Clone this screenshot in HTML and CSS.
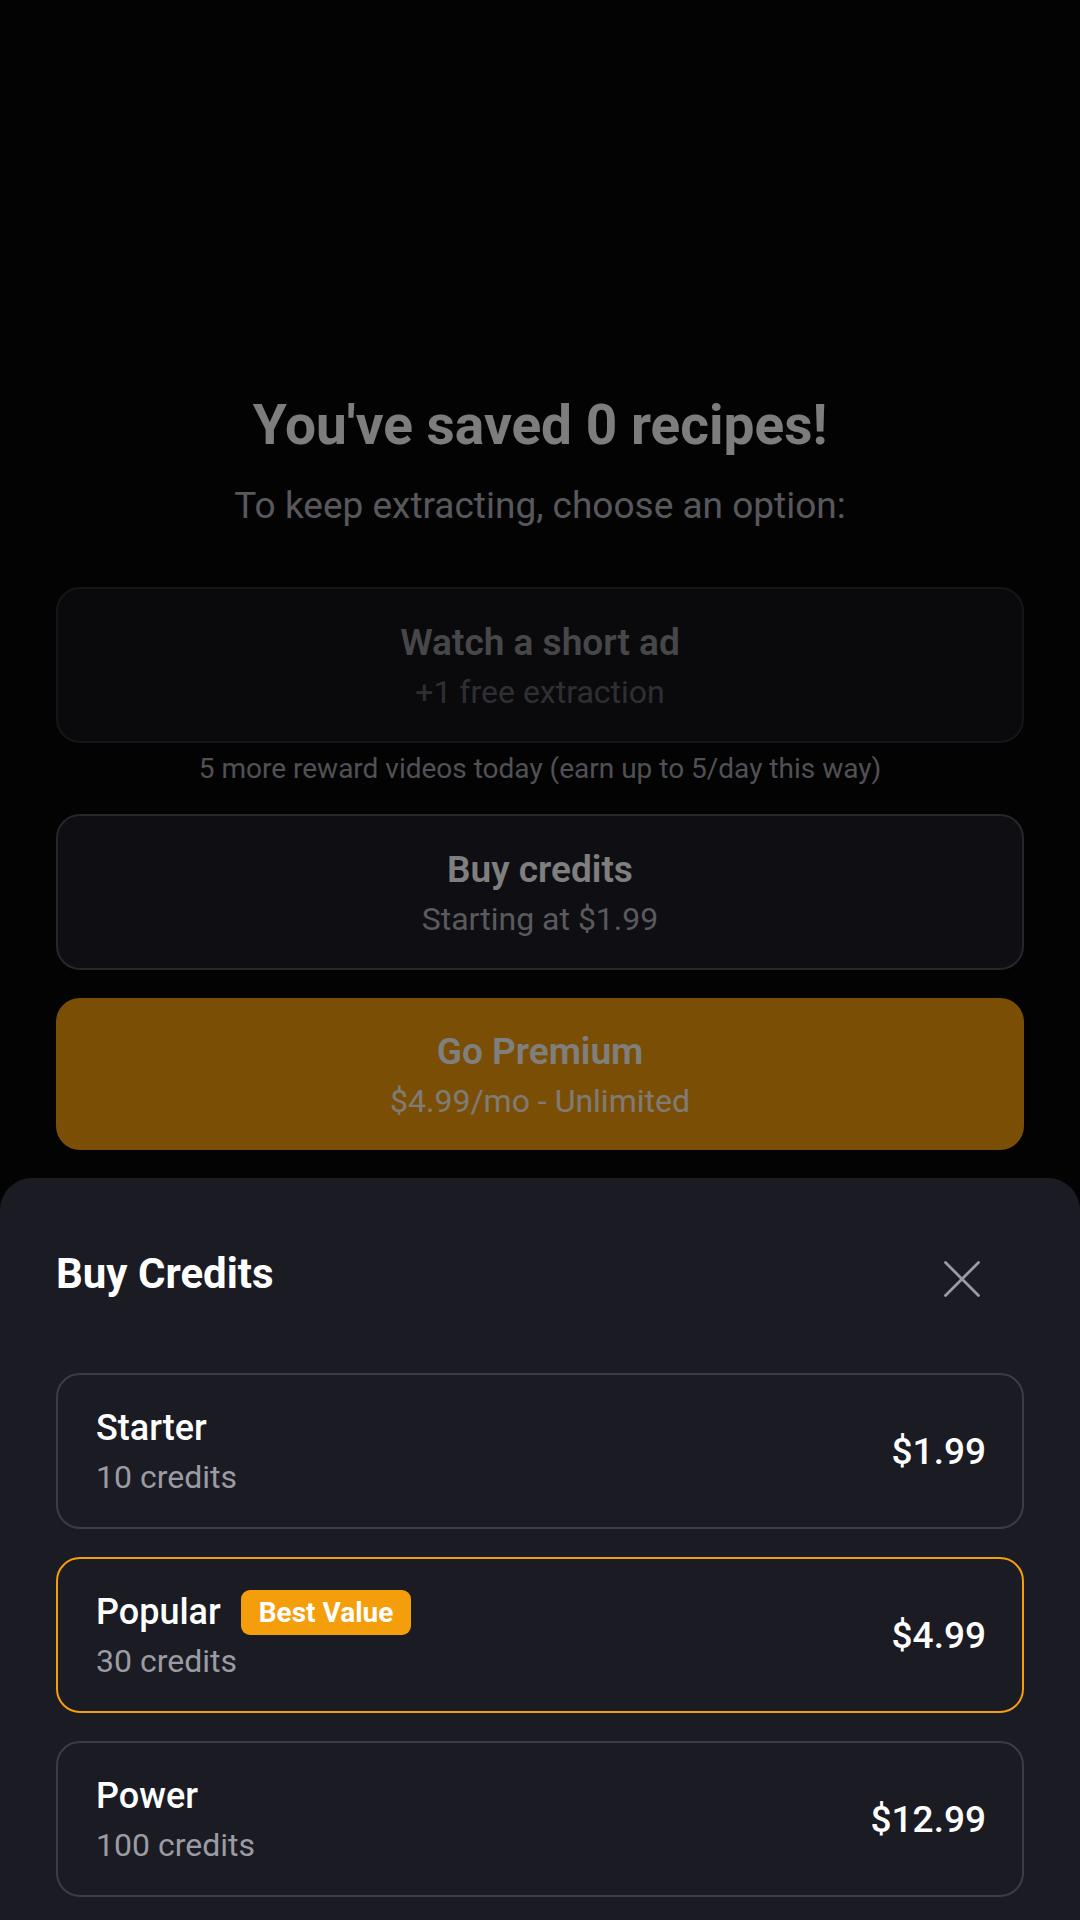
FILE: index.html
```html
<!DOCTYPE html>
<html lang="en">
<head>
<meta charset="utf-8">
<title>Buy Credits</title>
<link rel="stylesheet" href="styles.css">
</head>
<body>
<div class="screen">
  <main class="paywall">
    <h1 class="pw-title">You've saved 0 recipes!</h1>
    <p class="pw-sub">To keep extracting, choose an option:</p>

    <div class="option-group">
      <button class="option option-disabled">
        <span class="opt-title">Watch a short ad</span>
        <span class="opt-sub">+1 free extraction</span>
      </button>
      <p class="opt-note">5 more reward videos today (earn up to 5/day this way)</p>
    </div>

    <button class="option">
      <span class="opt-title">Buy credits</span>
      <span class="opt-sub">Starting at $1.99</span>
    </button>

    <button class="option option-premium">
      <span class="opt-title">Go Premium</span>
      <span class="opt-sub">$4.99/mo - Unlimited</span>
    </button>
  </main>

  <div class="backdrop"></div>

  <section class="sheet">
    <header class="sheet-head">
      <h2 class="sheet-title">Buy Credits</h2>
      <button class="close" aria-label="Close">
        <svg viewBox="0 0 40 40" width="40" height="40"><path d="M3.5 3.5L36.5 36.5M36.5 3.5L3.5 36.5" stroke="#9a9ba3" stroke-width="2.8" stroke-linecap="round" fill="none"/></svg>
      </button>
    </header>

    <div class="packs">
      <div class="pack">
        <div class="pack-info">
          <div class="pack-name-row"><span class="pack-name">Starter</span></div>
          <span class="pack-credits">10 credits</span>
        </div>
        <span class="pack-price">$1.99</span>
      </div>
      <div class="pack pack-featured">
        <div class="pack-info">
          <div class="pack-name-row"><span class="pack-name">Popular</span><span class="badge">Best Value</span></div>
          <span class="pack-credits">30 credits</span>
        </div>
        <span class="pack-price">$4.99</span>
      </div>
      <div class="pack">
        <div class="pack-info">
          <div class="pack-name-row"><span class="pack-name">Power</span></div>
          <span class="pack-credits">100 credits</span>
        </div>
        <span class="pack-price">$12.99</span>
      </div>
    </div>
  </section>
</div>
</body>
</html>
```

FILE: styles.css
```css
* { box-sizing: border-box; }

html, body {
  margin: 0;
  padding: 0;
}

body {
  width: 1080px;
  height: 1920px;
  overflow: hidden;
  background: #060608;
  font-family: Roboto, "Noto Sans", "Liberation Sans", sans-serif;
  color: #ffffff;
}

.screen {
  position: relative;
  width: 1080px;
  height: 1920px;
}

.paywall {
  display: flex;
  flex-direction: column;
  padding: 393px 56px 0;
}

.pw-title {
  margin: 0;
  font-size: 55px;
  line-height: 64px;
  font-weight: 700;
  text-align: center;
  color: #fafafa;
}

.pw-sub {
  margin: 27px 0 0;
  font-size: 37px;
  line-height: 44px;
  font-weight: 400;
  text-align: center;
  color: #b0b0b8;
}

.option-group {
  display: flex;
  flex-direction: column;
  margin-top: 59px;
}

.option {
  display: flex;
  flex-direction: column;
  align-items: center;
  gap: 8px;
  width: 100%;
  padding: 32px 0 30px;
  margin: 0;
  border: 2px solid #4c4c5a;
  border-radius: 24px;
  background: #1c1c26;
  font-family: inherit;
  color: #ffffff;
  cursor: pointer;
}

.paywall > .option { margin-top: 28px; }

.opt-title {
  font-size: 37px;
  line-height: 44px;
  font-weight: 600;
}

.opt-sub {
  font-size: 32px;
  line-height: 38px;
  font-weight: 400;
  color: #b4b4bc;
}

.option-disabled {
  background: #15151b;
  border-color: #2c2c34;
}
.option-disabled .opt-title { color: #8e8e95; }
.option-disabled .opt-sub { color: #5e5e66; }

.opt-note {
  margin: 9px 0 0;
  font-size: 28px;
  line-height: 34px;
  text-align: center;
  color: #a0a0aa;
}

.option-premium {
  background: #f59e0b;
  border: none;
}
.option-premium .opt-sub { color: #ffffff; opacity: 0.92; }

.backdrop {
  position: absolute;
  inset: 0;
  background: rgba(0, 0, 0, 0.5);
}

.sheet {
  position: absolute;
  left: 0;
  right: 0;
  top: 1178px;
  bottom: 0;
  background: #1b1b24;
  border-radius: 32px 32px 0 0;
  padding: 71px 56px 0;
}

.sheet-head {
  display: flex;
  justify-content: space-between;
  align-items: flex-start;
}

.sheet-title {
  margin: 0;
  font-size: 42px;
  line-height: 50px;
  font-weight: 700;
  color: #ffffff;
}

.close {
  width: 40px;
  height: 40px;
  margin: 10px 42px 0 0;
  padding: 0;
  border: none;
  background: transparent;
  display: flex;
}

.packs {
  display: flex;
  flex-direction: column;
  gap: 28px;
  margin-top: 74px;
}

.pack {
  display: flex;
  align-items: center;
  justify-content: space-between;
  height: 156px;
  padding: 1px 36px 0 38px;
  border: 2px solid #3c3c44;
  border-radius: 24px;
  background: #1b1b24;
}

.pack-featured { border-color: #f59e0b; }

.pack-info {
  display: flex;
  flex-direction: column;
  gap: 9px;
}

.pack-name-row {
  display: flex;
  align-items: center;
  gap: 20px;
  height: 42px;
}

.pack-name {
  font-size: 36px;
  line-height: 42px;
  font-weight: 500;
  color: #ffffff;
}

.badge {
  display: inline-flex;
  align-items: center;
  height: 45px;
  padding: 0 18px;
  border-radius: 9px;
  background: #f59e0b;
  font-size: 28px;
  font-weight: 700;
  color: #ffffff;
}

.pack-credits {
  font-size: 32px;
  line-height: 38px;
  font-weight: 400;
  color: #9b9ba3;
}

.pack-price {
  font-size: 37px;
  line-height: 44px;
  font-weight: 500;
  color: #ffffff;
}
```
